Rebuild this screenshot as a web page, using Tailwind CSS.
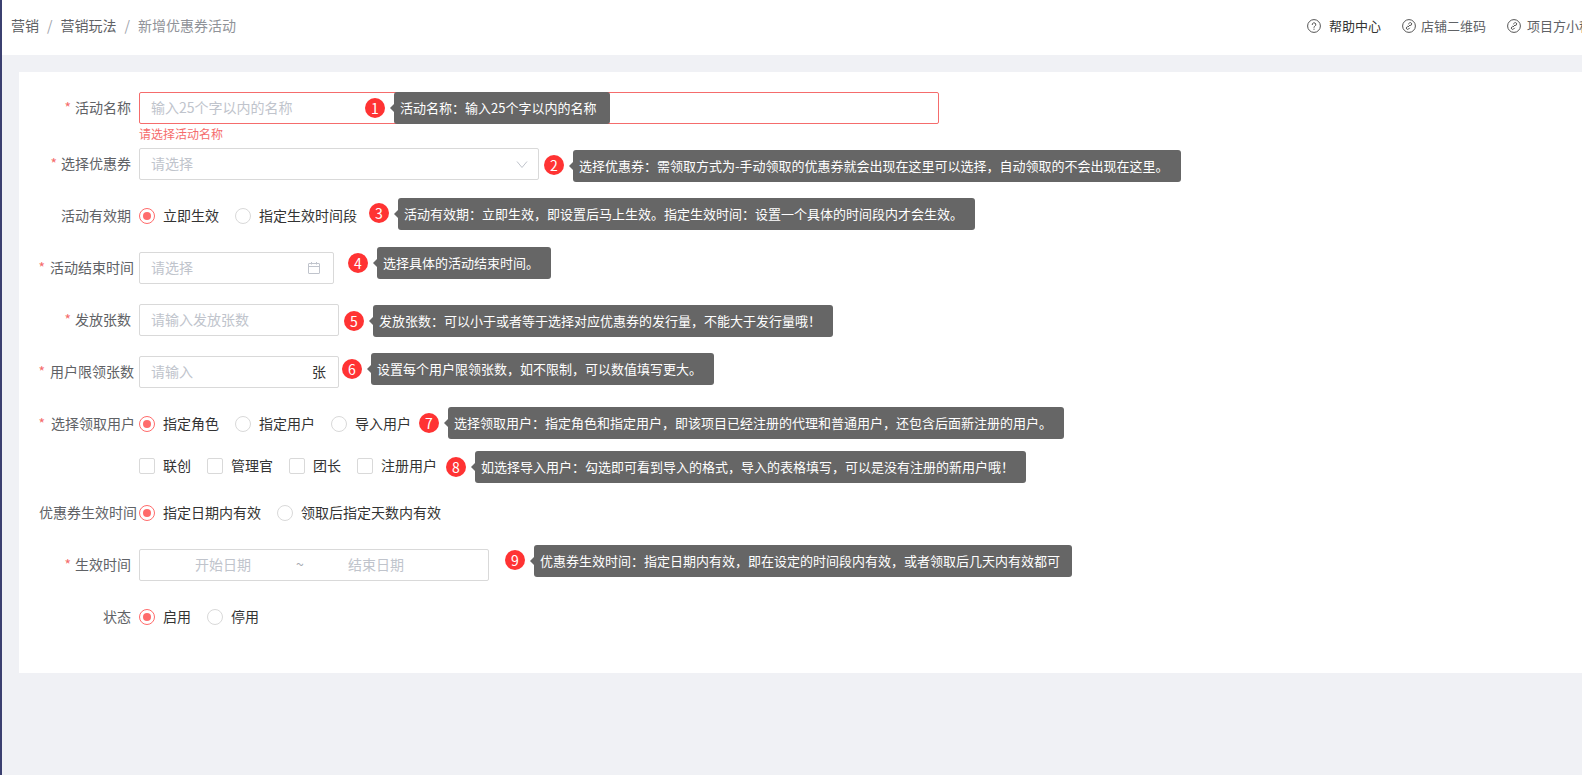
<!DOCTYPE html>
<html lang="zh">
<head>
<meta charset="utf-8">
<script src="https://cdn.jsdelivr.net/npm/@tailwindcss/browser@4"></script>
</head>
<body class="m-0 bg-[#f0f1f5] font-['Noto_Sans_CJK_SC','Noto_Sans',sans-serif] text-[14px] overflow-hidden">
<div class="w-[1582px] h-[775px] overflow-hidden flex">
  <div class="w-[2px] bg-[#3b4070] shrink-0"></div>
  <div class="flex-1 min-w-0 flex flex-col">
    <header class="h-[55px] bg-white flex items-center justify-between shrink-0 overflow-hidden">
      <nav class="flex items-center pl-[9px] text-[14px] text-[#606266] -mt-[5px]">
        <span>营销</span><span class="mx-[8px] text-[#a0a4ac]">/</span><span>营销玩法</span><span class="mx-[8px] text-[#a0a4ac]">/</span><span class="text-[#909399]">新增优惠券活动</span>
      </nav>
      <div class="flex items-center text-[13px] text-[#606266] w-[275px] shrink-0 overflow-hidden whitespace-nowrap -mt-[4px]">
        <svg class="w-[14px] h-[14px] shrink-0 mr-[8px]" viewBox="0 0 14 14" fill="none" stroke="#555" stroke-width="1"><circle cx="7" cy="7" r="6.4"/><path d="M5.2 5.6a1.8 1.8 0 1 1 2.6 1.6c-.6.3-.8.6-.8 1.2" stroke-linecap="round"/><circle cx="7" cy="10.2" r=".6" fill="#555" stroke="none"/></svg>
        <span class="text-[#333]">帮助中心</span>
        <svg class="w-[14px] h-[14px] shrink-0 ml-[21px] mr-[5px]" viewBox="0 0 14 14" fill="none" stroke="#555" stroke-width="1"><circle cx="7" cy="7" r="6.4"/><path d="M6.2 5.2l1.2-1.2a1.3 1.3 0 0 1 1.9 1.9L8.2 7M7.8 8.8L6.6 10a1.3 1.3 0 0 1-1.9-1.9L5.8 7M5.8 8.2l2.4-2.4"/></svg>
        <span>店铺二维码</span>
        <svg class="w-[14px] h-[14px] shrink-0 ml-[21px] mr-[6px]" viewBox="0 0 14 14" fill="none" stroke="#555" stroke-width="1"><circle cx="7" cy="7" r="6.4"/><path d="M6.2 5.2l1.2-1.2a1.3 1.3 0 0 1 1.9 1.9L8.2 7M7.8 8.8L6.6 10a1.3 1.3 0 0 1-1.9-1.9L5.8 7M5.8 8.2l2.4-2.4"/></svg>
        <span>项目方小程序</span>
      </div>
    </header>

    <main class="relative mt-[17px] ml-[17px] bg-white h-[601px] pt-[20px] text-[#333]">
      <!-- row 1 -->
      <div class="flex items-center h-[32px]">
        <label class="w-[120px] pr-[8px] pb-[2px] flex justify-end text-[#606266] whitespace-nowrap"><i class="not-italic text-[#f56c6c] mr-[4px]">*</i>活动名称</label>
        <div class="w-[800px] h-[32px] border border-[#f56c6c] rounded-[2px] pl-[11px] pb-[1px] flex items-center text-[#c0c4cc]">输入25个字以内的名称</div>
      </div>
      <div class="ml-[120px] h-[24px] text-[12px] leading-[20px] text-[#f56c6c]">请选择活动名称</div>
      <!-- row 2 -->
      <div class="flex items-center h-[32px]">
        <label class="w-[120px] pr-[8px] pb-[2px] flex justify-end text-[#606266] whitespace-nowrap"><i class="not-italic text-[#f56c6c] mr-[4px]">*</i>选择优惠券</label>
        <div class="w-[400px] h-[32px] border border-[#d9d9d9] rounded-[2px] pl-[11px] pr-[10px] pb-[1px] flex items-center justify-between text-[#c0c4cc]">请选择
          <svg class="w-[12px] h-[12px]" viewBox="0 0 12 12" fill="none" stroke="#c0c4cc" stroke-width="1"><path d="M1 3.5l5 6 5-6"/></svg>
        </div>
      </div>
      <!-- row 3 -->
      <div class="flex items-center h-[32px] mt-[20px]">
        <label class="w-[120px] pr-[8px] pb-[2px] flex justify-end text-[#606266] whitespace-nowrap">活动有效期</label>
        <div class="flex items-center gap-[16px]">
          <span class="flex items-center gap-[8px]"><span class="w-[16px] h-[16px] rounded-full border border-[#ff6b6b] flex items-center justify-center"><span class="w-[8px] h-[8px] rounded-full bg-[#ff6b6b]"></span></span><span class="pb-[2px]">立即生效</span></span>
          <span class="flex items-center gap-[8px]"><span class="w-[16px] h-[16px] rounded-full border border-[#d9d9d9]"></span><span class="pb-[2px]">指定生效时间段</span></span>
        </div>
      </div>
      <!-- row 4 -->
      <div class="flex items-center h-[32px] mt-[20px]">
        <label class="w-[120px] pr-[5px] pb-[2px] flex justify-end text-[#606266] whitespace-nowrap"><i class="not-italic text-[#f56c6c] mr-[5px]">*</i>活动结束时间</label>
        <div class="w-[195px] h-[32px] border border-[#d9d9d9] rounded-[2px] pl-[11px] pr-[12px] pb-[1px] flex items-center justify-between text-[#c0c4cc]">请选择
          <svg class="w-[14px] h-[14px]" viewBox="0 0 14 14" fill="none" stroke="#c0c4cc" stroke-width="1"><rect x="1.5" y="2.5" width="11" height="10" rx=".5"/><path d="M1.5 5.5h11M4.5 1v2.5M9.5 1v2.5"/></svg>
        </div>
      </div>
      <!-- row 5 -->
      <div class="flex items-center h-[32px] mt-[20px]">
        <label class="w-[120px] pr-[8px] pb-[2px] flex justify-end text-[#606266] whitespace-nowrap"><i class="not-italic text-[#f56c6c] mr-[4px]">*</i>发放张数</label>
        <div class="w-[200px] h-[32px] border border-[#d9d9d9] rounded-[2px] pl-[11px] pr-[12px] pb-[1px] flex items-center text-[#c0c4cc]">请输入发放张数</div>
      </div>
      <!-- row 6 -->
      <div class="flex items-center h-[32px] mt-[20px]">
        <label class="w-[120px] pr-[5px] pb-[2px] flex justify-end text-[#606266] whitespace-nowrap"><i class="not-italic text-[#f56c6c] mr-[5px]">*</i>用户限领张数</label>
        <div class="w-[200px] h-[32px] border border-[#d9d9d9] rounded-[2px] pl-[11px] pr-[12px] pb-[1px] flex items-center justify-between text-[#c0c4cc]">请输入<span class="text-[#333]">张</span></div>
      </div>
      <!-- row 7 -->
      <div class="flex items-center h-[32px] mt-[20px]">
        <label class="w-[120px] pr-[4px] pb-[2px] flex justify-end text-[#606266] whitespace-nowrap"><i class="not-italic text-[#f56c6c] mr-[6px]">*</i>选择领取用户</label>
        <div class="flex items-center gap-[16px]">
          <span class="flex items-center gap-[8px]"><span class="w-[16px] h-[16px] rounded-full border border-[#ff6b6b] flex items-center justify-center"><span class="w-[8px] h-[8px] rounded-full bg-[#ff6b6b]"></span></span><span class="pb-[2px]">指定角色</span></span>
          <span class="flex items-center gap-[8px]"><span class="w-[16px] h-[16px] rounded-full border border-[#d9d9d9]"></span><span class="pb-[2px]">指定用户</span></span>
          <span class="flex items-center gap-[8px]"><span class="w-[16px] h-[16px] rounded-full border border-[#d9d9d9]"></span><span class="pb-[2px]">导入用户</span></span>
        </div>
      </div>
      <!-- row 8 -->
      <div class="flex items-center h-[32px] mt-[10px] pl-[120px] gap-[16px]">
        <span class="flex items-center gap-[8px]"><span class="w-[16px] h-[16px] rounded-[2px] border border-[#d9d9d9]"></span><span class="pb-[2px]">联创</span></span>
        <span class="flex items-center gap-[8px]"><span class="w-[16px] h-[16px] rounded-[2px] border border-[#d9d9d9]"></span><span class="pb-[2px]">管理官</span></span>
        <span class="flex items-center gap-[8px]"><span class="w-[16px] h-[16px] rounded-[2px] border border-[#d9d9d9]"></span><span class="pb-[2px]">团长</span></span>
        <span class="flex items-center gap-[8px]"><span class="w-[16px] h-[16px] rounded-[2px] border border-[#d9d9d9]"></span><span class="pb-[2px]">注册用户</span></span>
      </div>
      <!-- row 9 -->
      <div class="flex items-center h-[32px] mt-[15px]">
        <label class="w-[120px] pr-[2px] pb-[2px] flex justify-end text-[#606266] whitespace-nowrap">优惠券生效时间</label>
        <div class="flex items-center gap-[16px]">
          <span class="flex items-center gap-[8px]"><span class="w-[16px] h-[16px] rounded-full border border-[#ff6b6b] flex items-center justify-center"><span class="w-[8px] h-[8px] rounded-full bg-[#ff6b6b]"></span></span><span class="pb-[2px]">指定日期内有效</span></span>
          <span class="flex items-center gap-[8px]"><span class="w-[16px] h-[16px] rounded-full border border-[#d9d9d9]"></span><span class="pb-[2px]">领取后指定天数内有效</span></span>
        </div>
      </div>
      <!-- row 10 -->
      <div class="flex items-center h-[32px] mt-[20px]">
        <label class="w-[120px] pr-[8px] pb-[2px] flex justify-end text-[#606266] whitespace-nowrap"><i class="not-italic text-[#f56c6c] mr-[4px]">*</i>生效时间</label>
        <div class="w-[350px] h-[32px] border border-[#d9d9d9] rounded-[2px] pl-[55px] pb-[1px] flex items-center text-[#c0c4cc]">
          <span>开始日期</span><span class="ml-[45px] w-[7px] text-[#a8abb2]">~</span><span class="ml-[45px]">结束日期</span>
        </div>
      </div>
      <!-- row 11 -->
      <div class="flex items-center h-[32px] mt-[20px]">
        <label class="w-[120px] pr-[8px] pb-[2px] flex justify-end text-[#606266] whitespace-nowrap">状态</label>
        <div class="flex items-center gap-[16px]">
          <span class="flex items-center gap-[8px]"><span class="w-[16px] h-[16px] rounded-full border border-[#ff6b6b] flex items-center justify-center"><span class="w-[8px] h-[8px] rounded-full bg-[#ff6b6b]"></span></span><span class="pb-[2px]">启用</span></span>
          <span class="flex items-center gap-[8px]"><span class="w-[16px] h-[16px] rounded-full border border-[#d9d9d9]"></span><span class="pb-[2px]">停用</span></span>
        </div>
      </div>

      <!-- annotations lying over the form (coords relative to card at 19,72) -->
      <div class="absolute left-[346px] top-[26px] w-[20px] h-[20px] rounded-full bg-[#ff3333] text-white text-[14px] flex items-center justify-center">1</div>
      <div class="absolute left-[375px] top-[20px] h-[32px] pl-[6px] pr-[14px] bg-[#666] rounded-[3px] text-white text-[13px] flex items-center whitespace-nowrap before:content-[''] before:absolute before:-left-[4px] before:top-[12px] before:border-y-[4px] before:border-r-[4px] before:border-y-transparent before:border-r-[#666]">活动名称：输入25个字以内的名称</div>

      <div class="absolute left-[525px] top-[83px] w-[20px] h-[20px] rounded-full bg-[#ff3333] text-white text-[14px] flex items-center justify-center">2</div>
      <div class="absolute left-[554px] top-[78px] h-[32px] pl-[6px] pr-[12px] bg-[#666] rounded-[3px] text-white text-[13px] flex items-center whitespace-nowrap before:content-[''] before:absolute before:-left-[4px] before:top-[12px] before:border-y-[4px] before:border-r-[4px] before:border-y-transparent before:border-r-[#666]">选择优惠券：需领取方式为-手动领取的优惠券就会出现在这里可以选择，自动领取的不会出现在这里。</div>

      <div class="absolute left-[350px] top-[131px] w-[20px] h-[20px] rounded-full bg-[#ff3333] text-white text-[14px] flex items-center justify-center">3</div>
      <div class="absolute left-[379px] top-[126px] h-[32px] pl-[6px] pr-[12px] bg-[#666] rounded-[3px] text-white text-[13px] flex items-center whitespace-nowrap before:content-[''] before:absolute before:-left-[4px] before:top-[12px] before:border-y-[4px] before:border-r-[4px] before:border-y-transparent before:border-r-[#666]">活动有效期：立即生效，即设置后马上生效。指定生效时间：设置一个具体的时间段内才会生效。</div>

      <div class="absolute left-[329px] top-[181px] w-[20px] h-[20px] rounded-full bg-[#ff3333] text-white text-[14px] flex items-center justify-center">4</div>
      <div class="absolute left-[358px] top-[175px] h-[32px] pl-[6px] pr-[12px] bg-[#666] rounded-[3px] text-white text-[13px] flex items-center whitespace-nowrap before:content-[''] before:absolute before:-left-[4px] before:top-[12px] before:border-y-[4px] before:border-r-[4px] before:border-y-transparent before:border-r-[#666]">选择具体的活动结束时间。</div>

      <div class="absolute left-[325px] top-[239px] w-[20px] h-[20px] rounded-full bg-[#ff3333] text-white text-[14px] flex items-center justify-center">5</div>
      <div class="absolute left-[354px] top-[233px] h-[32px] pl-[6px] pr-[12px] bg-[#666] rounded-[3px] text-white text-[13px] flex items-center whitespace-nowrap before:content-[''] before:absolute before:-left-[4px] before:top-[12px] before:border-y-[4px] before:border-r-[4px] before:border-y-transparent before:border-r-[#666]">发放张数：可以小于或者等于选择对应优惠券的发行量，不能大于发行量哦！</div>

      <div class="absolute left-[323px] top-[287px] w-[20px] h-[20px] rounded-full bg-[#ff3333] text-white text-[14px] flex items-center justify-center">6</div>
      <div class="absolute left-[352px] top-[281px] h-[32px] pl-[6px] pr-[12px] bg-[#666] rounded-[3px] text-white text-[13px] flex items-center whitespace-nowrap before:content-[''] before:absolute before:-left-[4px] before:top-[12px] before:border-y-[4px] before:border-r-[4px] before:border-y-transparent before:border-r-[#666]">设置每个用户限领张数，如不限制，可以数值填写更大。</div>

      <div class="absolute left-[400px] top-[341px] w-[20px] h-[20px] rounded-full bg-[#ff3333] text-white text-[14px] flex items-center justify-center">7</div>
      <div class="absolute left-[429px] top-[335px] h-[32px] pl-[6px] pr-[12px] bg-[#666] rounded-[3px] text-white text-[13px] flex items-center whitespace-nowrap before:content-[''] before:absolute before:-left-[4px] before:top-[12px] before:border-y-[4px] before:border-r-[4px] before:border-y-transparent before:border-r-[#666]">选择领取用户：指定角色和指定用户，即该项目已经注册的代理和普通用户，还包含后面新注册的用户。</div>

      <div class="absolute left-[427px] top-[385px] w-[20px] h-[20px] rounded-full bg-[#ff3333] text-white text-[14px] flex items-center justify-center">8</div>
      <div class="absolute left-[456px] top-[379px] h-[32px] pl-[6px] pr-[12px] bg-[#666] rounded-[3px] text-white text-[13px] flex items-center whitespace-nowrap before:content-[''] before:absolute before:-left-[4px] before:top-[12px] before:border-y-[4px] before:border-r-[4px] before:border-y-transparent before:border-r-[#666]">如选择导入用户：勾选即可看到导入的格式，导入的表格填写，可以是没有注册的新用户哦！</div>

      <div class="absolute left-[486px] top-[478px] w-[20px] h-[20px] rounded-full bg-[#ff3333] text-white text-[14px] flex items-center justify-center">9</div>
      <div class="absolute left-[515px] top-[473px] h-[32px] pl-[6px] pr-[12px] bg-[#666] rounded-[3px] text-white text-[13px] flex items-center whitespace-nowrap before:content-[''] before:absolute before:-left-[4px] before:top-[12px] before:border-y-[4px] before:border-r-[4px] before:border-y-transparent before:border-r-[#666]">优惠券生效时间：指定日期内有效，即在设定的时间段内有效，或者领取后几天内有效都可</div>
    </main>
  </div>
</div>
</body>
</html>
